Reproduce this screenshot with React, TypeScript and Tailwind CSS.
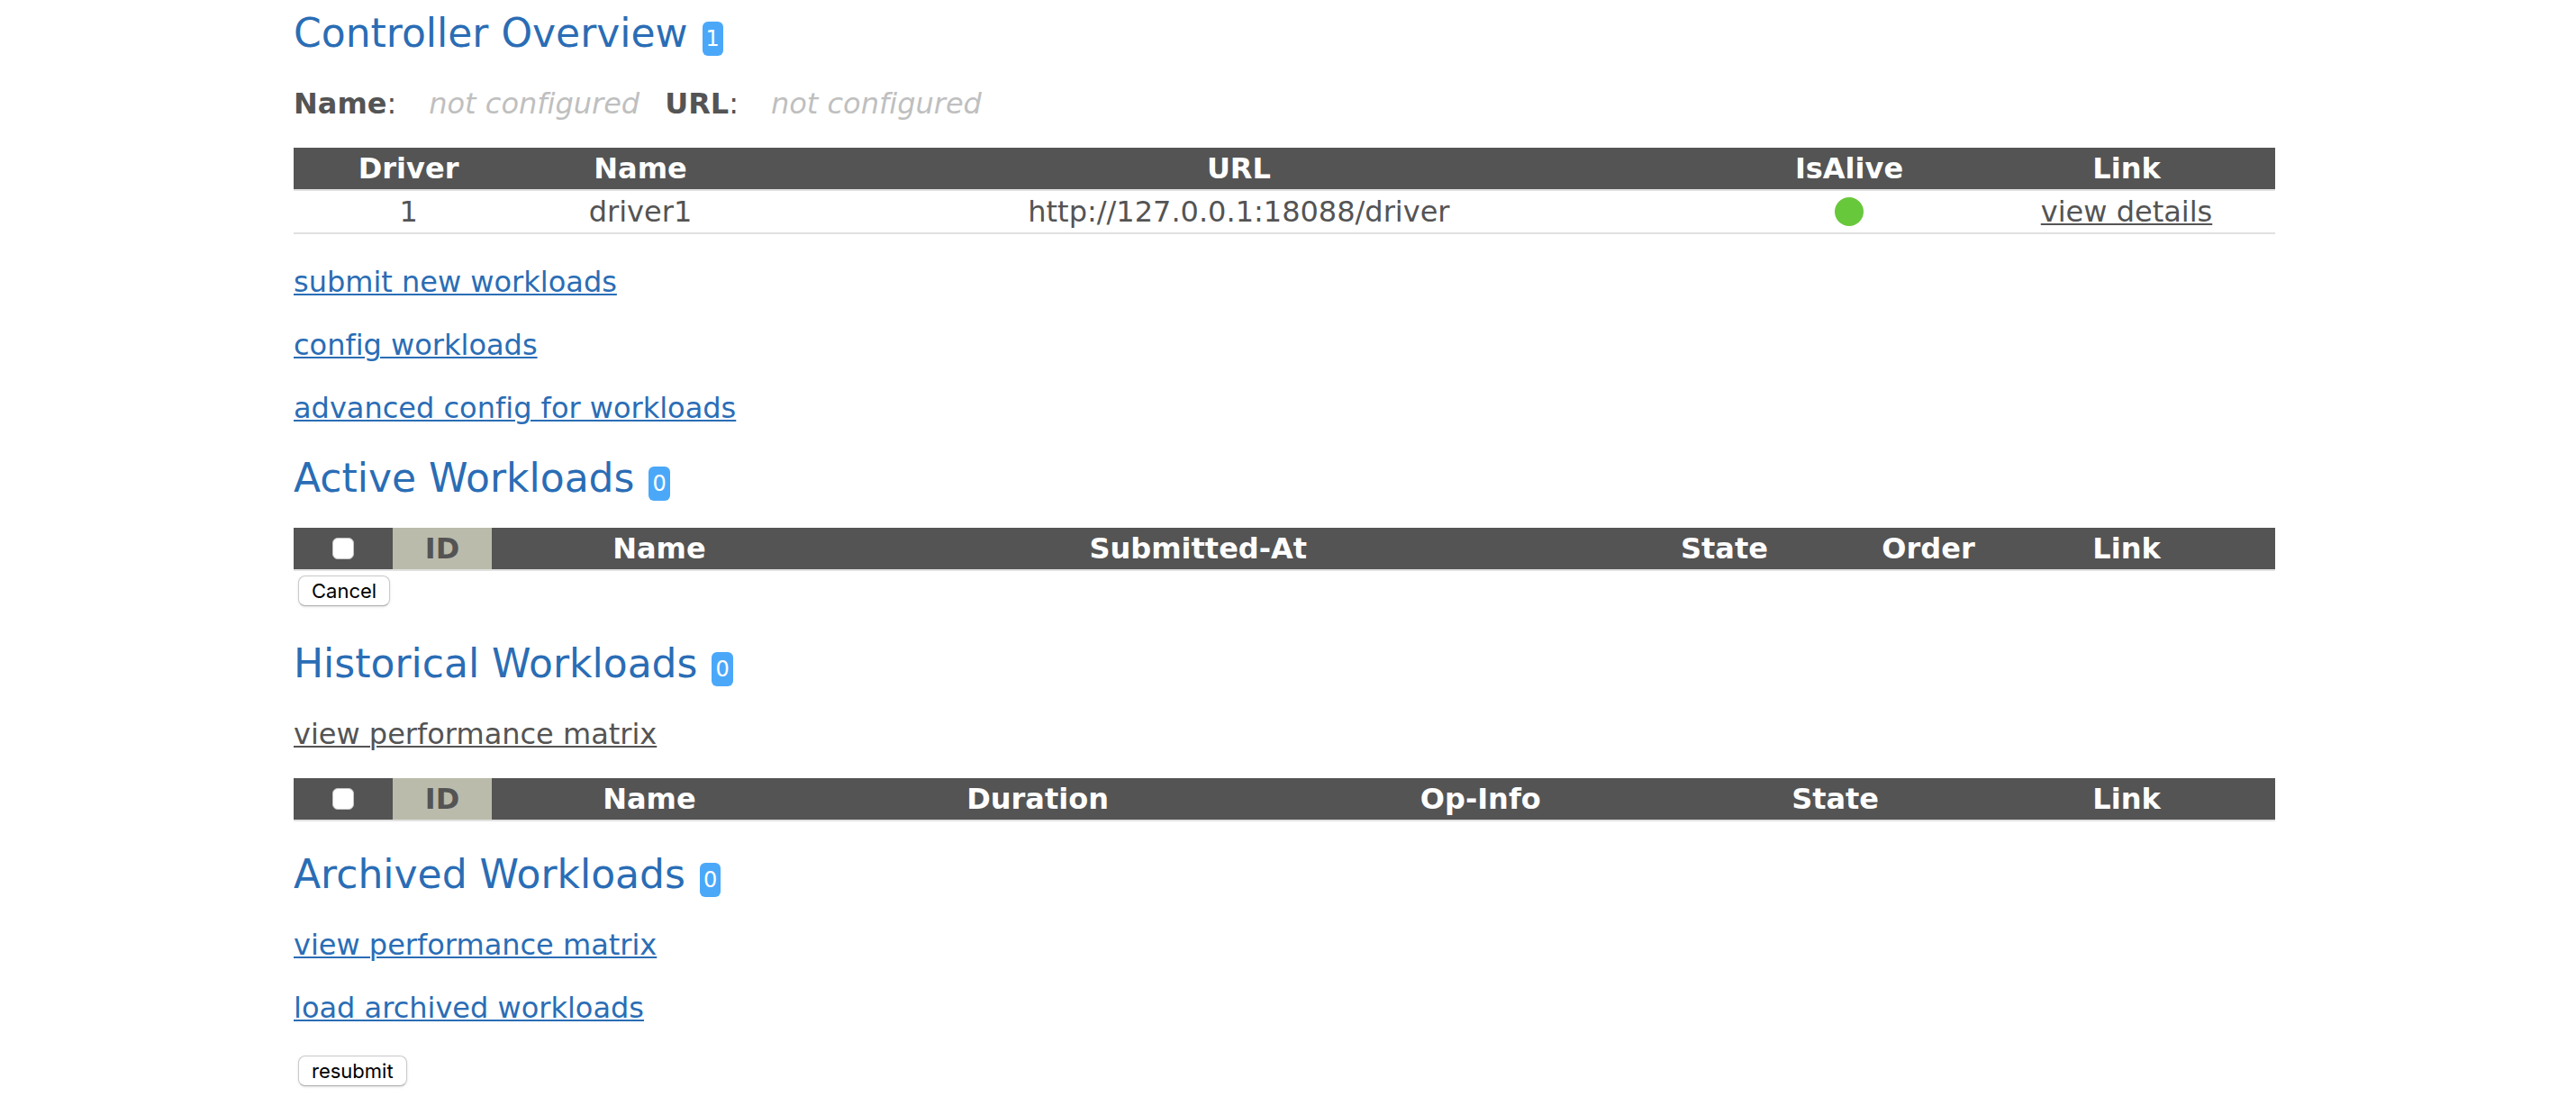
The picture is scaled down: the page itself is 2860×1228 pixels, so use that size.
import type { ReactNode } from "react";

const linkBlue = "text-[#2a6db5]";

function SectionTitle({ children, count }: { children: ReactNode; count: number }) {
  return (
    <h2 className="flex items-end gap-4 text-[44px] leading-[54px] text-[#2a6db5]">
      {children}
      <span className="mb-0.5 rounded-md bg-[#4ba8f9] px-1 text-2xl leading-[38px] text-white">{count}</span>
    </h2>
  );
}

function TextLink({ children, plain = false }: { children: ReactNode; plain?: boolean }) {
  return (
    <p>
      <a href="#" className={`underline decoration-2 underline-offset-2 ${plain ? "text-[#545454]" : linkBlue}`}>
        {children}
      </a>
    </p>
  );
}

function HeadRow({ children }: { children: ReactNode }) {
  return (
    <thead>
      <tr className="bg-[#545454] text-white">{children}</tr>
    </thead>
  );
}

function SelectCells({ label }: { label: string }) {
  return (
    <>
      <th className="w-[5%]">
        <input
          type="checkbox"
          aria-label={label}
          className="mx-auto block size-6 appearance-none rounded-md border border-[#c4c4c4] bg-white checked:bg-[#4ba8f9]"
        />
      </th>
      <th className="w-[5%] bg-[#bbbbab] text-[#545454]">ID</th>
    </>
  );
}

function PushButton({ children }: { children: ReactNode }) {
  return (
    <button
      type="button"
      className="ml-[5px] block rounded-lg border border-[#cacaca] border-b-[#b0b0b0] bg-white px-3.5 font-[Inter,sans-serif] text-[22px] leading-8 text-black shadow-sm"
    >
      {children}
    </button>
  );
}

const tableClass =
  "w-full table-fixed border-separate border-spacing-0 text-center [&_td]:h-12 [&_td]:border-b-2 [&_td]:border-[#e1e1e1] [&_th]:h-12 [&_th]:border-b-2 [&_th]:border-[#e1e1e1]";

export default function App() {
  return (
    <main className="min-h-screen bg-white pr-2 font-['DejaVu_Sans',Verdana,sans-serif] text-[32px] leading-[38px] text-[#545454] [font-variant-ligatures:none]">
      <div className="mx-auto max-w-[2200px] pt-2.5">
        <section>
          <SectionTitle count={1}>Controller Overview</SectionTitle>
          <p className="mt-8 flex">
            <span><strong>Name</strong>:</span>
            <em className="ml-9 text-[#bfbfbf]">not configured</em>
            <span className="ml-7"><strong>URL</strong>:</span>
            <em className="ml-9 text-[#bfbfbf]">not configured</em>
          </p>
          <table className={`mt-[30px] ${tableClass}`}>
            <HeadRow>
              <th className="w-[11.6%]">Driver</th>
              <th className="w-[11.8%]">Name</th>
              <th>URL</th>
              <th className="w-[13%]">IsAlive</th>
              <th className="w-[15%]">Link</th>
            </HeadRow>
            <tbody>
              <tr>
                <td>1</td>
                <td>driver1</td>
                <td>http://127.0.0.1:18088/driver</td>
                <td>
                  <span role="img" aria-label="alive" className="mx-auto block size-8 rounded-full bg-[#68c83b]" />
                </td>
                <td>
                  <a href="#" className="underline decoration-2 underline-offset-2">view details</a>
                </td>
              </tr>
            </tbody>
          </table>
          <div className="mt-[34px] flex flex-col gap-8">
            <TextLink>submit new workloads</TextLink>
            <TextLink>config workloads</TextLink>
            <TextLink>advanced config for workloads</TextLink>
          </div>
        </section>

        <section className="mt-8">
          <SectionTitle count={0}>Active Workloads</SectionTitle>
          <table className={`mt-7 ${tableClass}`}>
            <HeadRow>
              <SelectCells label="Select all active workloads" />
              <th className="w-[16.9%]">Name</th>
              <th>Submitted-At</th>
              <th className="w-[15.6%]">State</th>
              <th className="w-[5%]">Order</th>
              <th className="w-[15%]">Link</th>
            </HeadRow>
          </table>
          <div className="mt-[5px]">
            <PushButton>Cancel</PushButton>
          </div>
        </section>

        <section className="mt-[37px]">
          <SectionTitle count={0}>Historical Workloads</SectionTitle>
          <div className="mt-8">
            <TextLink plain>view performance matrix</TextLink>
          </div>
          <table className={`mt-[30px] ${tableClass}`}>
            <HeadRow>
              <SelectCells label="Select all historical workloads" />
              <th className="w-[15.9%]">Name</th>
              <th>Duration</th>
              <th className="w-[21.4%]">Op-Info</th>
              <th className="w-[14.4%]">State</th>
              <th className="w-[15%]">Link</th>
            </HeadRow>
          </table>
        </section>

        <section className="mt-8">
          <SectionTitle count={0}>Archived Workloads</SectionTitle>
          <div className="mt-8 flex flex-col gap-8">
            <TextLink>view performance matrix</TextLink>
            <TextLink>load archived workloads</TextLink>
          </div>
          <div className="mt-[34px]">
            <PushButton>resubmit</PushButton>
          </div>
        </section>
      </div>
    </main>
  );
}
